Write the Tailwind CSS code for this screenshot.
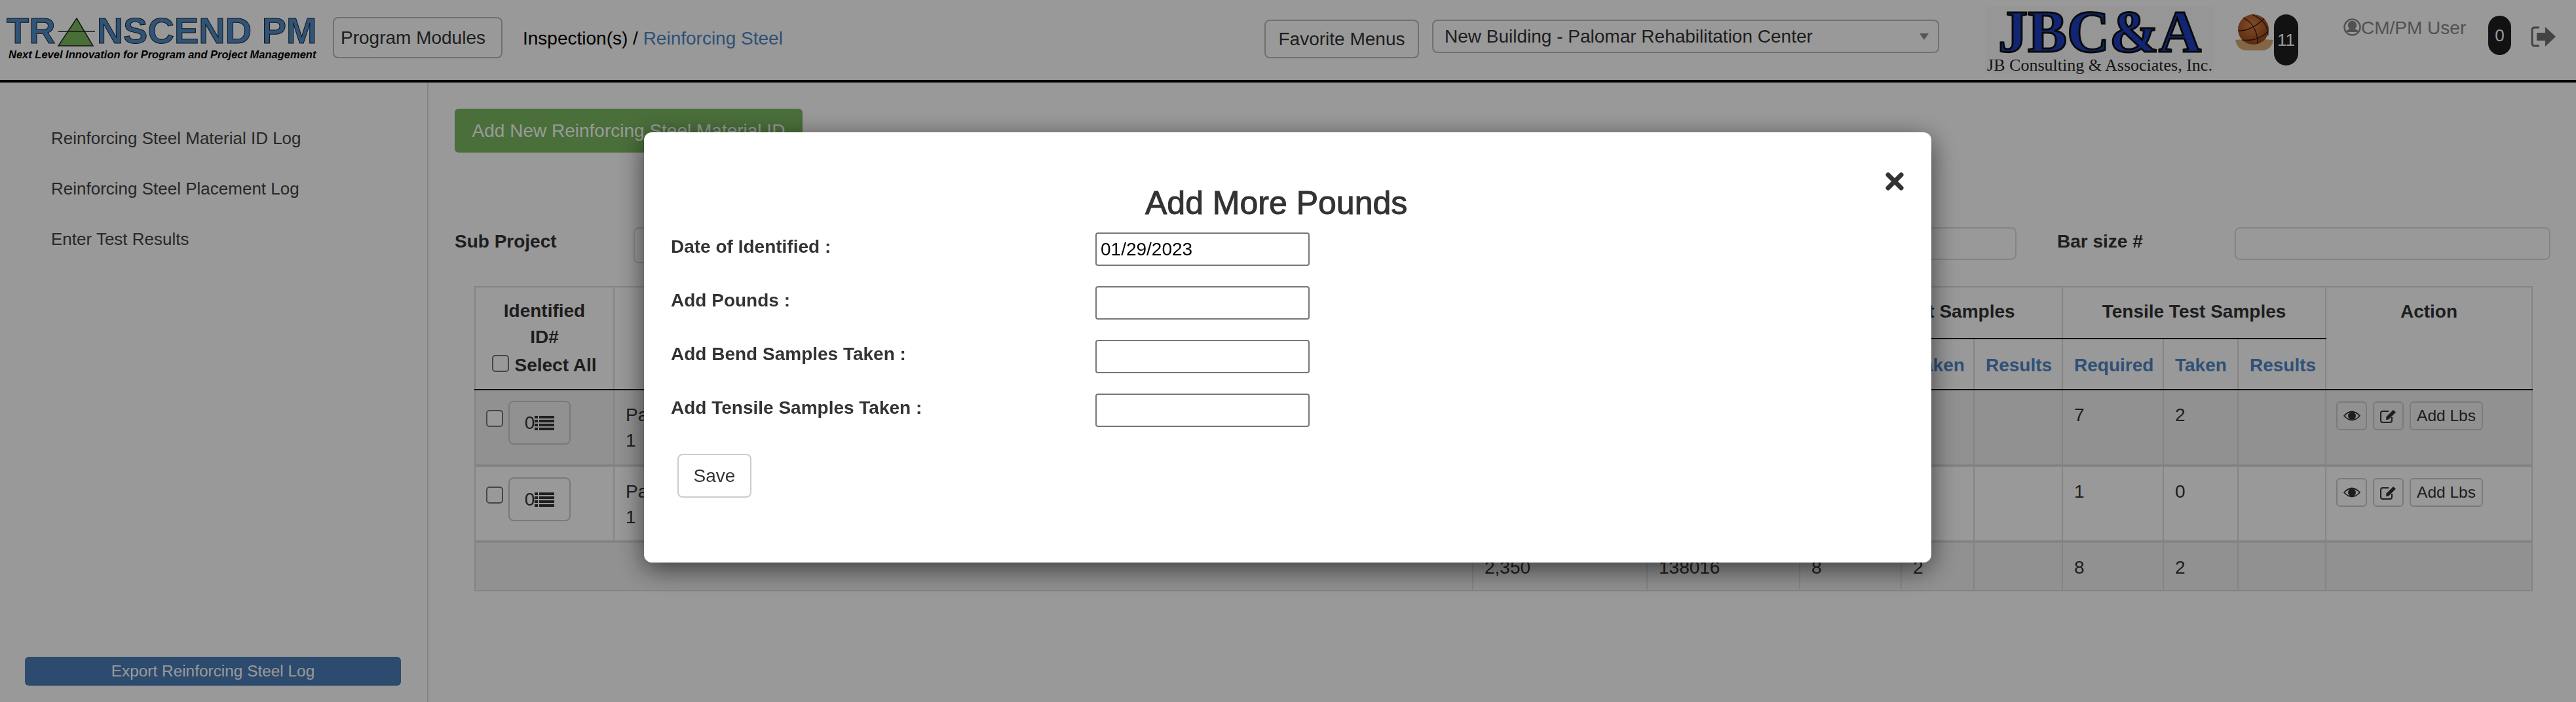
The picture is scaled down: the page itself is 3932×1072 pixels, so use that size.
<!DOCTYPE html>
<html lang="en">
<head>
    <meta charset="UTF-8">
    <title>Reinforcing Steel</title>
    <script src="https://cdn.jsdelivr.net/npm/@tailwindcss/browser@4"></script>
</head>
<body class="bg-white font-['Liberation_Sans',Arial,sans-serif] text-[26px] text-[#333] h-[1072px] w-[3932px] overflow-hidden">
    <!-- Header -->
    <header class="h-[126px] border-b-4 border-black flex items-start">
        <div class="ml-[10px] mt-[20px] w-[478px] shrink-0">
            <div class="flex items-end h-[53px] font-bold text-[56px] leading-[53px] text-[#4f8ccb] [-webkit-text-stroke:1px_#222]">
                <span>TR</span>
                <svg class="w-[63px] h-[44px] shrink-0 mb-[2px]" viewBox="0 0 63 44"><path d="M32 1 L57 43 L4 43 Z" fill="#7cb85c" stroke="#222" stroke-width="1.5"/><path d="M4 21 H60" stroke="#222" stroke-width="1.5"/></svg>
                <span>NSCEND&nbsp;PM</span>
            </div>
            <div class="font-bold italic text-[16.5px] leading-[18px] mt-[1px] ml-[3px] text-black whitespace-nowrap">Next Level Innovation for Program and Project Management</div>
        </div>
        <button class="ml-[20px] mt-[26px] w-[259px] h-[63px] border-2 border-[#bbb] rounded-lg bg-white text-[28px] text-left pl-[10px] shrink-0">Program Modules</button>
        <div class="ml-[31px] mt-[43px] w-[400px] text-[28px] leading-[32px] text-black whitespace-nowrap shrink-0">Inspection(s) / <span class="text-[#4f85c5]">Reinforcing Steel</span></div>
        <button class="ml-[732px] mt-[30px] w-[236px] h-[59px] border-2 border-[#bbb] rounded-lg bg-white text-[28px] shrink-0">Favorite Menus</button>
        <div class="ml-[20px] mt-[30px] w-[774px] h-[51px] border-2 border-[#bbb] rounded-lg flex items-center justify-between pl-[17px] pr-[14px] shrink-0">
            <span class="text-[28px]">New Building - Palomar Rehabilitation Center</span>
            <span class="w-0 h-0 border-x-[7px] border-x-transparent border-t-[10px] border-t-[#8e8e8e]"></span>
        </div>
        <div class="ml-[70px] mt-[10px] w-[350px] h-[102px] bg-[#fbfbfb] shrink-0 text-center font-['Liberation_Serif',serif]">
            <div class="font-bold text-[90px] leading-[78px] text-[#1d3fc0] [-webkit-text-stroke:3px_#111] whitespace-nowrap">JBC&amp;A</div>
            <div class="text-[26px] leading-[24px] text-[#222] whitespace-nowrap">JB Consulting &amp; Associates, Inc.</div>
        </div>
        <svg class="ml-[32px] mt-[22px] w-[58px] h-[55px] shrink-0" viewBox="0 0 58 55">
            <defs><radialGradient id="ball" cx="0.45" cy="0.35" r="0.7"><stop offset="0" stop-color="#d98044"/><stop offset="1" stop-color="#8f4018"/></radialGradient></defs>
            <path d="M0 39 Q29 36 58 39 Q56 52 44 55 H14 Q2 52 0 39 Z" fill="#d8ac74"/>
            <ellipse cx="27.5" cy="23" rx="23.5" ry="23" fill="url(#ball)"/>
            <path d="M12 5 Q34 16 34 45 M25 0 Q50 10 50 32 M4 25 Q24 26 44 6 M10 39 Q34 42 50 26" fill="none" stroke="#2e1408" stroke-width="1.2"/>
        </svg>
        <span class="ml-[1px] mt-[22px] w-[37px] h-[78px] bg-[#1f1f1f] rounded-full flex items-center justify-center text-[26px] text-white shrink-0">11</span>
        <svg class="ml-[69px] mt-[28px] w-[27px] h-[27px] shrink-0" viewBox="0 0 27 27" fill="none" stroke="#888" stroke-width="2.5"><circle cx="13.5" cy="13.5" r="12"/><circle cx="13.5" cy="10.5" r="5.5" fill="#888"/><path d="M4 21 Q13.5 12 23 21" fill="#888"/></svg>
        <span class="mt-[27px] w-[163px] text-[28px] leading-[32px] text-[#888] whitespace-nowrap shrink-0">CM/PM User</span>
        <span class="ml-[31px] mt-[24px] w-[35px] h-[60px] bg-[#1f1f1f] rounded-full flex items-center justify-center text-[26px] text-white shrink-0">0</span>
        <svg class="ml-[30px] mt-[40px] w-[39px] h-[32px] shrink-0" viewBox="0 0 39 32"><path d="M13 2 H6 Q2 2 2 6 V26 Q2 30 6 30 H13" fill="none" stroke="#707070" stroke-width="3"/><path d="M9 10 H22 V1 L38 16 L22 31 V22 H9 Z" fill="#707070"/></svg>
    </header>

    <div class="flex h-[946px]">
        <!-- Sidebar -->
        <aside class="w-[654px] shrink-0 border-r-2 border-[#ddd] flex flex-col">
            <nav class="pl-[78px] pt-[70px] flex flex-col gap-[47px] text-[26px] leading-[30px] text-[#444]">
                <a>Reinforcing Steel Material ID Log</a>
                <a>Reinforcing Steel Placement Log</a>
                <a>Enter Test Results</a>
            </nav>
            <button class="mt-auto mb-[25px] ml-[38px] w-[574px] h-[44px] bg-[#4a7db8] rounded-md text-white text-[24.4px]">Export Reinforcing Steel Log</button>
        </aside>

        <!-- Main -->
        <main class="flex-1 min-w-0 pl-[40px]">
            <button class="mt-[40px] w-[531px] h-[67px] bg-[#7cb962] rounded-md text-white text-[28px]">Add New Reinforcing Steel Material ID</button>

            <div class="mt-[114px] flex items-start h-[57px]">
                <label class="w-[273px] font-bold text-[28px] leading-[32px] pt-[6px] text-[#333]">Sub Project</label>
                <input class="w-[600px] h-[55px] border-2 border-[#ddd] rounded-lg">
                <input class="ml-[900px] w-[611px] h-[50px] border-2 border-[#ddd] rounded-lg">
                <label class="ml-[62px] w-[271px] font-bold text-[28px] leading-[32px] pt-[6px] text-[#333]">Bar size #</label>
                <input class="w-[482px] h-[50px] border-2 border-[#ddd] rounded-lg">
            </div>

            <table class="mt-[33px] ml-[30px] w-[3140px] table-fixed border-collapse text-[28px]">
                <colgroup>
                    <col class="w-[212px]"><col class="w-[1311px]"><col class="w-[266px]"><col class="w-[233px]"><col class="w-[155px]"><col class="w-[111px]"><col class="w-[135px]"><col class="w-[154px]"><col class="w-[114px]"><col class="w-[134px]"><col class="w-[315px]">
                </colgroup>
                <thead class="font-bold text-[28px] leading-[40px] text-[#333]">
                    <tr class="h-[79px]">
                        <th rowspan="2" class="border-2 border-[#ddd] border-b-black align-top pt-[16px] font-bold">Identified<br>ID#<br>
                            <span class="inline-flex items-center gap-[8px] mt-[3px]"><input type="checkbox" class="w-[26px] h-[26px] -mt-[6px] appearance-none border-2 border-[#767676] rounded-[5px] bg-white">Select All</span>
                        </th>
                        <th rowspan="2" class="border-2 border-[#ddd] border-b-black"></th>
                        <th rowspan="2" class="border-2 border-[#ddd] border-b-black"></th>
                        <th rowspan="2" class="border-2 border-[#ddd] border-b-black"></th>
                        <th colspan="3" class="border-2 border-[#ddd] border-b-black pb-[3px]">Bend Test Samples</th>
                        <th colspan="3" class="border-2 border-[#ddd] border-b-black pb-[3px]">Tensile Test Samples</th>
                        <th rowspan="2" class="border-2 border-[#ddd] border-b-black align-top pt-[17px]">Action</th>
                    </tr>
                    <tr class="h-[78px] text-[#4f85c5] text-left">
                        <th class="border-2 border-[#ddd] border-b-black px-[17px] pt-[4px]">Required</th>
                        <th class="border-2 border-[#ddd] border-b-black px-[17px] pt-[4px]">Taken</th>
                        <th class="border-2 border-[#ddd] border-b-black px-[17px] pt-[4px]">Results</th>
                        <th class="border-2 border-[#ddd] border-b-black px-[17px] pt-[4px]">Required</th>
                        <th class="border-2 border-[#ddd] border-b-black px-[17px] pt-[4px]">Taken</th>
                        <th class="border-2 border-[#ddd] border-b-black px-[17px] pt-[4px]">Results</th>
                    </tr>
                </thead>
                <tbody class="leading-[39px] align-top">
                    <tr class="h-[116px] bg-black/5">
                        <td class="border-2 border-b-4 border-[#ddd] pt-[16px] pl-[16px]">
                            <div class="flex items-center gap-[8px]">
                                <input type="checkbox" class="w-[26px] h-[26px] -mt-[14px] appearance-none border-2 border-[#767676] rounded-[5px] bg-white">
                                <button class="w-[95px] h-[67px] border-2 border-[#ccc] rounded-lg flex items-center justify-center text-[28px]">0<svg class="w-[30px] h-[24px]" viewBox="0 0 30 24" fill="#333"><path d="M0 1h5v4H0zM0 7h5v4H0zM0 13h5v4H0zM0 19h5v4H0zM7 1h23v4H7zM7 7h23v4H7zM7 13h23v4H7zM7 19h23v4H7z"/></svg></button>
                            </div>
                        </td>
                        <td class="border-2 border-b-4 border-[#ddd] pt-[18px] pl-[17px]">Pa<br>1</td>
                        <td class="border-2 border-b-4 border-[#ddd]"></td>
                        <td class="border-2 border-b-4 border-[#ddd]"></td>
                        <td class="border-2 border-b-4 border-[#ddd]"></td>
                        <td class="border-2 border-b-4 border-[#ddd]"></td>
                        <td class="border-2 border-b-4 border-[#ddd]"></td>
                        <td class="border-2 border-b-4 border-[#ddd] pt-[18px] pl-[17px]">7</td>
                        <td class="border-2 border-b-4 border-[#ddd] pt-[18px] pl-[17px]">2</td>
                        <td class="border-2 border-b-4 border-[#ddd]"></td>
                        <td class="border-2 border-b-4 border-[#ddd] pt-[17px] pl-[15px]">
                            <div class="flex gap-[9px]">
                                <button class="w-[47px] h-[44px] border-2 border-[#ccc] rounded-md flex items-center justify-center"><svg class="w-[26px] h-[18px]" viewBox="0 0 26 18"><path d="M1 9 Q13 -4 25 9 Q13 22 1 9 Z" fill="none" stroke="#333" stroke-width="1.8"/><circle cx="13" cy="9" r="6" fill="#333"/></svg></button>
                                <button class="w-[47px] h-[44px] border-2 border-[#ccc] rounded-md flex items-center justify-center"><svg class="w-[25px] h-[22px]" viewBox="0 0 25 22" fill="none" stroke="#333" stroke-width="2"><path d="M18 13 V18 Q18 21 15 21 H4 Q1 21 1 18 V7 Q1 4 4 4 H13"/><path d="M9 17 L9.5 12.5 L20 2 L24 5.5 L13 16.5 Z" fill="#333" stroke="none"/></svg></button>
                                <button class="w-[112px] h-[44px] border-2 border-[#ccc] rounded-md text-[24.5px] leading-none">Add Lbs</button>
                            </div>
                        </td>
                    </tr>
                    <tr class="h-[116px]">
                        <td class="border-2 border-b-4 border-[#ddd] pt-[16px] pl-[16px]">
                            <div class="flex items-center gap-[8px]">
                                <input type="checkbox" class="w-[26px] h-[26px] -mt-[14px] appearance-none border-2 border-[#767676] rounded-[5px] bg-white">
                                <button class="w-[95px] h-[67px] border-2 border-[#ccc] rounded-lg flex items-center justify-center text-[28px]">0<svg class="w-[30px] h-[24px]" viewBox="0 0 30 24" fill="#333"><path d="M0 1h5v4H0zM0 7h5v4H0zM0 13h5v4H0zM0 19h5v4H0zM7 1h23v4H7zM7 7h23v4H7zM7 13h23v4H7zM7 19h23v4H7z"/></svg></button>
                            </div>
                        </td>
                        <td class="border-2 border-b-4 border-[#ddd] pt-[18px] pl-[17px]">Pa<br>1</td>
                        <td class="border-2 border-b-4 border-[#ddd]"></td>
                        <td class="border-2 border-b-4 border-[#ddd]"></td>
                        <td class="border-2 border-b-4 border-[#ddd]"></td>
                        <td class="border-2 border-b-4 border-[#ddd]"></td>
                        <td class="border-2 border-b-4 border-[#ddd]"></td>
                        <td class="border-2 border-b-4 border-[#ddd] pt-[18px] pl-[17px]">1</td>
                        <td class="border-2 border-b-4 border-[#ddd] pt-[18px] pl-[17px]">0</td>
                        <td class="border-2 border-b-4 border-[#ddd]"></td>
                        <td class="border-2 border-b-4 border-[#ddd] pt-[17px] pl-[15px]">
                            <div class="flex gap-[9px]">
                                <button class="w-[47px] h-[44px] border-2 border-[#ccc] rounded-md flex items-center justify-center"><svg class="w-[26px] h-[18px]" viewBox="0 0 26 18"><path d="M1 9 Q13 -4 25 9 Q13 22 1 9 Z" fill="none" stroke="#333" stroke-width="1.8"/><circle cx="13" cy="9" r="6" fill="#333"/></svg></button>
                                <button class="w-[47px] h-[44px] border-2 border-[#ccc] rounded-md flex items-center justify-center"><svg class="w-[25px] h-[22px]" viewBox="0 0 25 22" fill="none" stroke="#333" stroke-width="2"><path d="M18 13 V18 Q18 21 15 21 H4 Q1 21 1 18 V7 Q1 4 4 4 H13"/><path d="M9 17 L9.5 12.5 L20 2 L24 5.5 L13 16.5 Z" fill="#333" stroke="none"/></svg></button>
                                <button class="w-[112px] h-[44px] border-2 border-[#ccc] rounded-md text-[24.5px] leading-none">Add Lbs</button>
                            </div>
                        </td>
                    </tr>
                    <tr class="h-[75px] bg-black/5">
                        <td colspan="2" class="border-2 border-[#ddd]"></td>
                        <td class="border-2 border-[#ddd] pt-[18px] pl-[17px]">2,350</td>
                        <td class="border-2 border-[#ddd] pt-[18px] pl-[17px]">138016</td>
                        <td class="border-2 border-[#ddd] pt-[18px] pl-[17px]">8</td>
                        <td class="border-2 border-[#ddd] pt-[18px] pl-[17px]">2</td>
                        <td class="border-2 border-[#ddd]"></td>
                        <td class="border-2 border-[#ddd] pt-[18px] pl-[17px]">8</td>
                        <td class="border-2 border-[#ddd] pt-[18px] pl-[17px]">2</td>
                        <td class="border-2 border-[#ddd]"></td>
                        <td class="border-2 border-[#ddd]"></td>
                    </tr>
                </tbody>
            </table>
        </main>
    </div>

    <!-- Modal -->
    <div class="fixed inset-0 bg-black/40">
        <div class="absolute left-[983px] top-[202px] w-[1965px] h-[657px] bg-white rounded-xl shadow-[0_10px_40px_rgba(0,0,0,0.6)] px-[41px]">
            <button class="absolute right-[38px] top-[57px] w-[36px] h-[36px] flex items-center justify-center"><svg class="w-[28px] h-[28px]" viewBox="0 0 28 28"><path d="M4 4 L24 24 M24 4 L4 24" stroke="#333" stroke-width="7" stroke-linecap="round"/></svg></button>
            <h2 class="pt-[80px] pl-[724px] text-[50px] leading-[56px] text-[#333] [-webkit-text-stroke:1px_#333] whitespace-nowrap">Add More Pounds</h2>
            <div class="mt-[17px] flex flex-col gap-[31px] font-bold text-[28px] leading-[32px]">
                <div class="flex h-[51px]"><label class="w-[648px] pt-[6px]">Date of Identified :</label><input class="w-[327px] border-2 border-[#767676] rounded-[4px] px-[6px] font-normal text-[28px] text-black" value="01/29/2023"></div>
                <div class="flex h-[51px]"><label class="w-[648px] pt-[6px]">Add Pounds :</label><input class="w-[327px] border-2 border-[#767676] rounded-[4px]"></div>
                <div class="flex h-[51px]"><label class="w-[648px] pt-[6px]">Add Bend Samples Taken :</label><input class="w-[327px] border-2 border-[#767676] rounded-[4px]"></div>
                <div class="flex h-[51px]"><label class="w-[648px] pt-[6px]">Add Tensile Samples Taken :</label><input class="w-[327px] border-2 border-[#767676] rounded-[4px]"></div>
            </div>
            <button class="mt-[41px] ml-[10px] w-[113px] h-[67px] border-2 border-[#ccc] rounded-lg text-[28px] text-[#333]">Save</button>
        </div>
    </div>
</body>
</html>
